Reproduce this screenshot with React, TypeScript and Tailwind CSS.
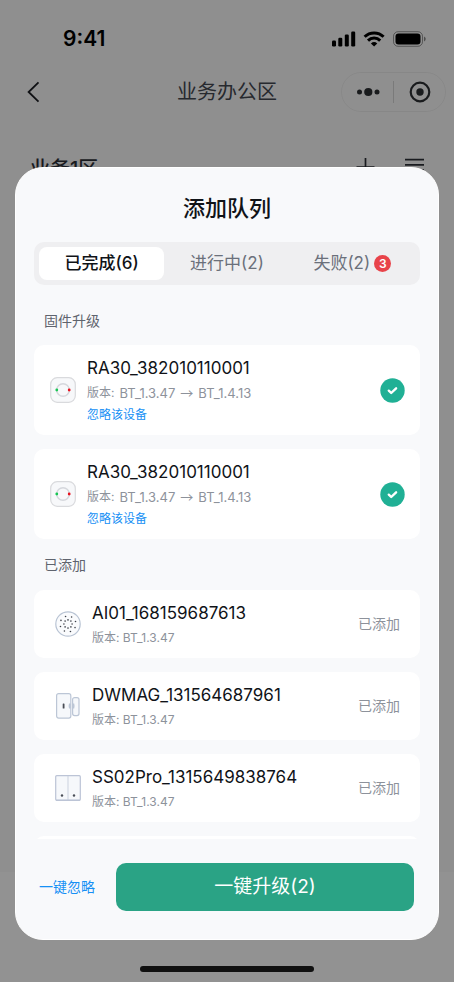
import type { ReactNode } from "react";

const FONT = "font-['Inter','Noto_Sans_CJK_SC',sans-serif]";

function StatusBar() {
  return (
    <div className="flex items-center justify-between pt-[25px] pr-7 pl-[63px]">
      <span className="text-[21px] leading-7 font-semibold text-black">9:41</span>
      <svg width="94" height="16" viewBox="0 0 94 16" className="text-black" aria-hidden="true">
        <g fill="currentColor">
          <rect x="0" y="9.5" width="4" height="6" rx="1.2" />
          <rect x="6.3" y="6.8" width="4" height="8.7" rx="1.2" />
          <rect x="12.8" y="3.6" width="4" height="11.9" rx="1.2" />
          <rect x="19.2" y="0.5" width="4" height="15" rx="1.2" />
        </g>
        <g fill="none" stroke="currentColor" strokeWidth="3">
          <path d="M32.6 5.8a13.6 13.6 0 0 1 19 0" />
          <path d="M36 9.6a8.7 8.7 0 0 1 12.2 0" />
        </g>
        <path d="M42.1 15.6l-3.2-3.2a4.7 4.7 0 0 1 6.4 0z" fill="currentColor" />
        <rect x="61.5" y="0.7" width="29" height="14.6" rx="4.6" fill="none" stroke="currentColor" strokeOpacity="0.4" />
        <rect x="63.5" y="2.6" width="25" height="10.8" rx="3" fill="currentColor" />
        <path d="M92 5.6v4.8c1-.4 1.7-1.3 1.7-2.4s-.7-2-1.7-2.4z" fill="currentColor" fillOpacity="0.45" />
      </svg>
    </div>
  );
}

function NavBar() {
  return (
    <div className="mt-[19px] grid h-10 grid-cols-[1fr_auto_1fr] items-center px-2">
      <button type="button" aria-label="返回" className="justify-self-start pl-[19px]">
        <svg width="13" height="22" viewBox="0 0 13 22" fill="none" stroke="#1b1d22" strokeWidth="1.8">
          <path d="M11.5 1.3L1.6 11l9.9 9.7" />
        </svg>
      </button>
      <h1 className="text-xl text-[#41454e]">业务办公区</h1>
      <div className="flex h-10 w-[105px] items-center justify-self-end rounded-full border border-black/5">
        <button type="button" aria-label="更多" className="flex flex-1 justify-center">
          <svg width="24" height="10" viewBox="0 0 24 10" fill="#2b2d31">
            <circle cx="3.5" cy="5" r="2.5" />
            <circle cx="12.3" cy="5" r="4.1" />
            <circle cx="21" cy="5" r="2.5" />
          </svg>
        </button>
        <span className="h-[22px] w-px bg-black/15" />
        <button type="button" aria-label="关闭" className="flex flex-1 justify-center">
          <svg width="22" height="22" viewBox="0 0 22 22">
            <circle cx="11" cy="11" r="9.3" fill="none" stroke="#2b2d31" strokeWidth="2.2" />
            <circle cx="11" cy="11" r="3.7" fill="#2b2d31" />
          </svg>
        </button>
      </div>
    </div>
  );
}

function AreaBar() {
  return (
    <div className="mt-[42px] flex items-start justify-between px-[30px]">
      <h2 className="text-xl leading-[30px] font-medium text-[#2b2e35]">业务1区</h2>
      <div className="flex gap-[30px] pt-1">
        <button type="button" aria-label="添加">
          <svg width="19" height="19" viewBox="0 0 19 19" fill="none" stroke="#2b2e35" strokeWidth="1.7">
            <path d="M9.5 0v18.5M0.5 9h18" />
          </svg>
        </button>
        <button type="button" aria-label="列表">
          <svg width="19" height="19" viewBox="0 0 19 19" fill="none" stroke="#2b2e35" strokeWidth="1.7">
            <path d="M0 1.7h19M0 6.8h19M0 12h19" />
          </svg>
        </button>
      </div>
    </div>
  );
}

function RingIcon() {
  return (
    <svg width="26" height="26" viewBox="0 0 26 26" className="shrink-0" aria-hidden="true">
      <rect x="0.7" y="0.7" width="24.6" height="24.6" rx="6.5" fill="#f7f8fa" stroke="#d9dadd" strokeWidth="1.2" />
      <circle cx="13" cy="13" r="6.3" fill="none" stroke="#d5d7dc" strokeWidth="1.4" />
      <circle cx="6.8" cy="13" r="1.4" fill="#17c653" />
      <circle cx="19.2" cy="13" r="1.4" fill="#e8121f" />
    </svg>
  );
}

function SpeakerIcon() {
  const ring = (count: number, radius: number, offset: number) =>
    Array.from({ length: count }, (_, i) => {
      const a = ((i + offset) / count) * Math.PI * 2;
      return <circle key={`${radius}-${i}`} cx={13 + Math.cos(a) * radius} cy={13 + Math.sin(a) * radius} r="0.8" />;
    });
  return (
    <svg width="26" height="26" viewBox="0 0 26 26" className="shrink-0" aria-hidden="true">
      <circle cx="13" cy="13" r="12.2" fill="#fafbfd" stroke="#b9c4d4" strokeWidth="1.2" />
      <g fill="#3d4149">
        {ring(8, 7.9, 0.6)}
        {ring(8, 4.1, 0)}
      </g>
    </svg>
  );
}

function DoorIcon() {
  return (
    <svg width="26" height="26" viewBox="0 0 26 26" className="shrink-0" aria-hidden="true">
      <g fill="#f6f8fb" stroke="#bcc6d6" strokeWidth="1.2">
        <rect x="1.6" y="0.7" width="14.2" height="24.4" rx="2" />
        <rect x="17.6" y="4.6" width="6.4" height="18" rx="2" />
      </g>
      <rect x="7.7" y="10.5" width="1.8" height="5" rx="0.6" fill="#4a4e57" />
      <path d="M14 10.5h1.8v5H14q-.8-2.5 0-5zM17.6 10.5h1.6q.8 2.5 0 5h-1.6z" fill="#bcc6d6" />
    </svg>
  );
}

function SwitchIcon() {
  return (
    <svg width="26" height="26" viewBox="0 0 26 26" className="shrink-0" aria-hidden="true">
      <rect x="0.7" y="0.7" width="24.6" height="24.6" rx="1" fill="#f6f8fb" stroke="#bcc4d6" strokeWidth="1.2" />
      <path d="M13 1v24" stroke="#cbd2df" />
      <path d="M1 25.2h24" stroke="#bcc4d6" strokeWidth="1.3" />
      <circle cx="7" cy="20.5" r="1.2" fill="#4a4e57" />
      <circle cx="19" cy="20.5" r="1.2" fill="#4a4e57" />
    </svg>
  );
}

function CheckBadge() {
  return (
    <svg width="25" height="25" viewBox="0 0 25 25" className="shrink-0" role="img" aria-label="已完成">
      <circle cx="12.5" cy="12.5" r="12.2" fill="#20b095" />
      <path d="M8.8 12.7l2.4 2.3 4.9-4.7" fill="none" stroke="#fff" strokeWidth="2.4" strokeLinecap="round" strokeLinejoin="round" />
    </svg>
  );
}

function UpgradeCard({ name, from, to }: { name: string; from: string; to: string }) {
  return (
    <li className="flex items-center rounded-[10px] bg-white py-[9px] pr-[15px] pl-4">
      <RingIcon />
      <div className="ml-[11px] min-w-0 flex-1">
        <p className="text-[17px] leading-7 text-[#101318]">{name}</p>
        <p className="flex gap-[5px] text-[13px] leading-[22px] text-[#8d929b]">
          <span className="text-xs leading-[22px]">版本:</span>
          <span>{from}</span>
          <span className="font-['Noto_Sans_CJK_SC',sans-serif] leading-[22px]">→</span>
          <span>{to}</span>
        </p>
        <button type="button" className="block text-xs leading-[22px] text-[#1690f5]">
          忽略该设备
        </button>
      </div>
      <CheckBadge />
    </li>
  );
}

function AddedCard({ icon, name, version }: { icon: ReactNode; name: string; version: string }) {
  return (
    <li className="flex items-center rounded-[10px] bg-white py-[9px] pr-5 pl-[21px]">
      {icon}
      <div className="ml-[11px] min-w-0 flex-1">
        <p className="text-[17px] leading-7 text-[#101318]">{name}</p>
        <p className="text-xs leading-[22px] text-[#8d929b]">版本: {version}</p>
      </div>
      <span className="text-sm text-[#8d929b]">已添加</span>
    </li>
  );
}

const upgrades = [
  { id: 1, name: "RA30_382010110001", from: "BT_1.3.47", to: "BT_1.4.13" },
  { id: 2, name: "RA30_382010110001", from: "BT_1.3.47", to: "BT_1.4.13" },
];

const added = [
  { icon: <SpeakerIcon />, name: "AI01_168159687613", version: "BT_1.3.47" },
  { icon: <DoorIcon />, name: "DWMAG_131564687961", version: "BT_1.3.47" },
  { icon: <SwitchIcon />, name: "SS02Pro_1315649838764", version: "BT_1.3.47" },
];

function Tabs() {
  return (
    <div role="tablist" className="mx-[18px] mt-[18px] flex rounded-[10px] bg-[#efeff1] p-[5px] text-[17px] leading-[33px]">
      <button type="button" role="tab" aria-selected="true" className="flex-1 rounded-lg bg-white font-medium text-[#101318]">
        已完成(6)
      </button>
      <button type="button" role="tab" aria-selected="false" className="flex-1 text-[#6b707b]">
        进行中(2)
      </button>
      <button type="button" role="tab" aria-selected="false" className="flex flex-1 items-center justify-center gap-1 text-[#6b707b]">
        失败(2)
        <span className="size-[17px] rounded-full bg-[#e8434a] text-xs leading-[17px] font-semibold text-white">3</span>
      </button>
    </div>
  );
}

export default function App() {
  return (
    <div className={`relative flex min-h-screen flex-col bg-[#efefef] ${FONT}`}>
      <StatusBar />
      <NavBar />
      <AreaBar />
      <div className="mt-auto h-[110px] bg-[#f4f4f4]" />

      <div className="absolute inset-0 flex flex-col bg-black/40 px-[15px] pt-[167px]">
        <section role="dialog" aria-labelledby="queue-title" className="flex min-h-0 flex-1 flex-col rounded-[28px] border border-white bg-[#f8f9fb]">
          <h2 id="queue-title" className="pt-6 text-center text-[22px] leading-8 font-medium text-[#101318]">
            添加队列
          </h2>
          <Tabs />
          <div className="min-h-0 flex-1 overflow-hidden px-[18px]">
            <h3 className="mt-[26px] mb-[14px] ml-2.5 text-sm leading-5 text-[#5f646e]">固件升级</h3>
            <ul className="flex flex-col gap-[14px]">
              {upgrades.map((d) => (
                <UpgradeCard key={d.id} name={d.name} from={d.from} to={d.to} />
              ))}
            </ul>
            <h3 className="mt-4 mb-[15px] ml-2.5 text-sm leading-5 text-[#5f646e]">已添加</h3>
            <ul className="flex flex-col gap-[14px]">
              {added.map((d) => (
                <AddedCard key={d.name} icon={d.icon} name={d.name} version={d.version} />
              ))}
              <li className="h-[68px] rounded-[10px] bg-white" />
            </ul>
          </div>
          <div className="flex items-center gap-[21px] pt-6 pr-6 pb-7 pl-[23px]">
            <button type="button" className="text-sm text-[#1690f5]">
              一键忽略
            </button>
            <button type="button" className="h-12 flex-1 rounded-[10px] bg-[#2aa385] text-[19px] text-white">
              一键升级(2)
            </button>
          </div>
        </section>
        <div className="flex h-[42px] items-end justify-center pb-2.5">
          <div className="h-1.5 w-[174px] rounded-full bg-[#101010]" />
        </div>
      </div>
    </div>
  );
}
